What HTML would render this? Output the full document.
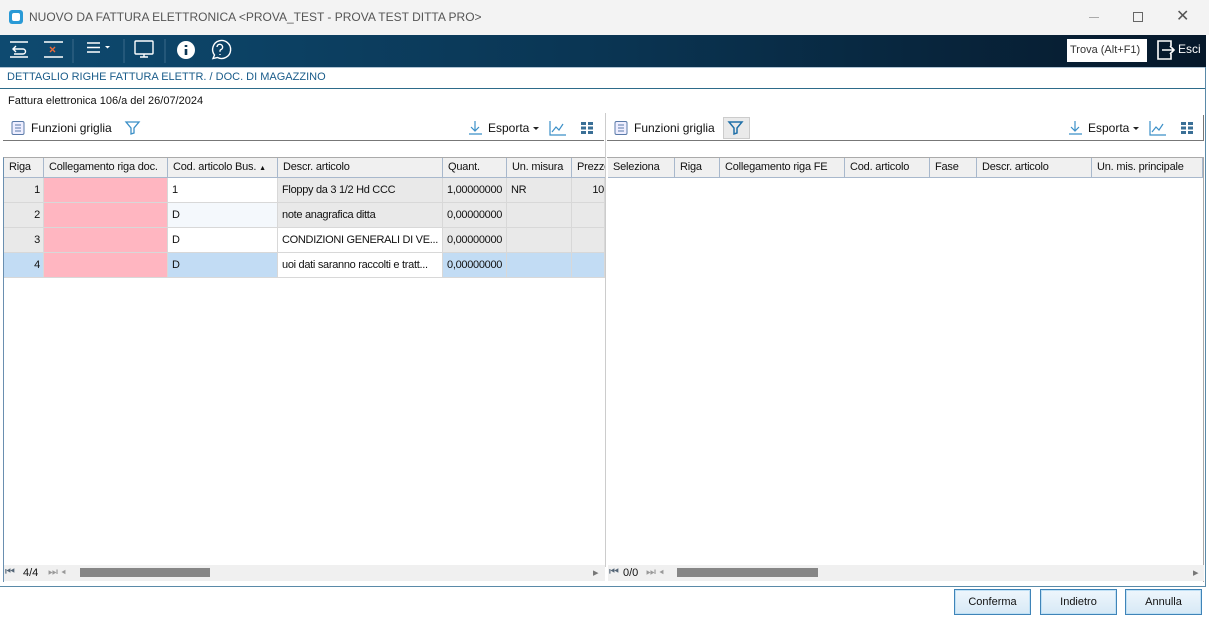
<!DOCTYPE html>
<html><head><meta charset="utf-8"><style>
*{box-sizing:border-box;margin:0;padding:0}
body{width:1209px;height:618px;overflow:hidden;background:#fff;font-family:"Liberation Sans",sans-serif;font-size:11px;color:#111;position:relative}
.a{position:absolute}
.hdr{background:#f0f0f0;border-right:1px solid #a8b8cc;border-bottom:1px solid #a8b8cc;height:20px;line-height:19px;padding-left:5px;white-space:nowrap;overflow:hidden;letter-spacing:-0.2px}
.cell{height:25px;line-height:24px;border-bottom:1px solid #d8d8d8;border-right:1px solid #d8d8d8;white-space:nowrap;overflow:hidden;padding-left:4px;letter-spacing:-0.3px}
.btn{position:absolute;top:589px;width:77px;height:26px;border:1px solid #3f84b8;background:linear-gradient(#eef6fc,#d7e9f6);text-align:center;line-height:24px;font-size:11px;box-shadow:inset 0 0 0 1px #bfe0f5}
</style></head><body>
<div class="a" style="left:0;top:0;width:1209px;height:35px;background:#f3f3f3"></div>
<div class="a" style="left:9px;top:10px;width:14px;height:14px;border-radius:3px;background:#2a9ad6"></div>
<div class="a" style="left:12px;top:13px;width:8px;height:8px;border-radius:2px;background:#fff"></div>
<div class="a" style="left:29px;top:10px;font-size:12px;color:#555">NUOVO DA FATTURA ELETTRONICA &lt;PROVA_TEST - PROVA TEST DITTA PRO&gt;</div>
<div class="a" style="left:1089px;top:17px;width:10px;height:1px;background:#aaa"></div>
<div class="a" style="left:1133px;top:12px;width:10px;height:10px;border:1px solid #666"></div>
<div class="a" style="left:1176px;top:6px;font-size:16px;color:#555">✕</div>
<div class="a" style="left:0;top:35px;width:1206px;height:32px;background:linear-gradient(90deg,#0e4a70,#0a3553 50%,#06182a)"></div>
<svg class="a" style="left:0;top:35px" width="240" height="32">
<g stroke="#fff" fill="none" stroke-width="1.4">
<path d="M10 7h18M10 22h18"/><path d="M16 11l-3 3 3 3M13 14h10a2.5 2.5 0 0 1 0 5h-9"/>
<path d="M44 7h19M44 22h19"/><path d="M50 12l5 5M55 12l-5 5" stroke="#e86a3a"/>
<path d="M87 8h13M87 12.5h13M87 17h13"/>
<rect x="135" y="6" width="18" height="13" rx="1"/><path d="M140 22h8M144 19v3"/>
<path d="M213 23.5l1.5-3.5a9 9 0 1 1 3 2.5z"/><path d="M217 12a2.8 2.8 0 1 1 3.5 2.8c-0.5 0.3-0.5 1-0.5 2M220 19v1"/>
</g>
<path d="M105 11l2.5 2.5 2.5-2.5z" fill="#fff"/>
<path d="M73 4v24M124 4v24M165 4v24" stroke="#3c6a8a"/>
<circle cx="186" cy="15" r="9" fill="#fff"/><path d="M186 10v2M186 14v6" stroke="#0a3553" stroke-width="2.6"/>
</svg>
<div class="a" style="left:1067px;top:39px;width:80px;height:23px;background:#fff;font-size:11px;line-height:23px;padding-left:3px;color:#333">Trova (Alt+F1)</div>
<svg class="a" style="left:1154px;top:38px" width="22" height="24"><g stroke="#fff" fill="none" stroke-width="1.6"><path d="M10 3H4v18h6M10 3h7v5M17 16v5h-7"/><path d="M8 12h12M16 8l4 4-4 4"/></g></svg>
<div class="a" style="left:1178px;top:42px;color:#fff;font-size:12px">Esci</div>
<div class="a" style="left:0;top:67px;width:1206px;height:22px;border-bottom:1px solid #2d6b8a;border-top:1px solid #b0c4d4"></div>
<div class="a" style="left:7px;top:71px;color:#1a5c8a;font-size:11px">DETTAGLIO RIGHE FATTURA ELETTR. / DOC. DI MAGAZZINO</div>
<div class="a" style="left:8px;top:95px;font-size:11px">Fattura elettronica 106/a del 26/07/2024</div>
<div class="a" style="left:1205px;top:67px;width:1px;height:520px;background:#5a8aa8"></div>
<div class="a" style="left:0;top:586px;width:1206px;height:1px;background:#5a8aa8"></div>
<div class="a" style="left:3px;top:115px;width:601px;height:26px;border-bottom:1px solid #777"></div>
<div class="a" style="left:607px;top:115px;width:597px;height:26px;border-bottom:1px solid #777;border-right:1px solid #777"></div>
<div class="a" style="left:605px;top:113px;width:1px;height:454px;background:#ccc"></div>
<svg class="a" style="left:10px;top:120px" width="16" height="16"><rect x="2" y="1.5" width="12" height="13" rx="1.5" fill="#eef" stroke="#5a7aa8"/><path d="M5 5h6M5 8h6M5 11h6" stroke="#5a7aa8"/></svg>
<div class="a" style="left:31px;top:121px;font-size:12px">Funzioni griglia</div>
<svg class="a" style="left:124px;top:119px" width="18" height="17"><path d="M2 3h13l-5 6v5l-3 1V9z" fill="none" stroke="#3b8fc7" stroke-width="1.3"/></svg>
<svg class="a" style="left:613px;top:120px" width="16" height="16"><rect x="2" y="1.5" width="12" height="13" rx="1.5" fill="#eef" stroke="#5a7aa8"/><path d="M5 5h6M5 8h6M5 11h6" stroke="#5a7aa8"/></svg>
<div class="a" style="left:634px;top:121px;font-size:12px">Funzioni griglia</div>
<div class="a" style="left:723px;top:117px;width:27px;height:22px;background:#eaeaea;border:1px solid #ccc"></div>
<svg class="a" style="left:727px;top:119px" width="18" height="17"><path d="M2 3h13l-5 6v5l-3 1V9z" fill="none" stroke="#1f6fa8" stroke-width="1.5"/></svg>
<svg class="a" style="left:467px;top:119px" width="140" height="18"><g fill="none" stroke="#3b8fc7" stroke-width="1.2"><path d="M8 2v10M4 8l4 4 4-4M2 15h13"/><path d="M83 2v14h16M85 13l4-5 3 3 4-6"/></g><path d="M66 8l3 3 3-3z" fill="#222"/><g fill="#3a6f96"><rect x="114" y="3" width="5" height="3"/><rect x="121" y="3" width="5" height="3"/><rect x="114" y="7.5" width="5" height="3"/><rect x="121" y="7.5" width="5" height="3"/><rect x="114" y="12" width="5" height="3"/><rect x="121" y="12" width="5" height="3"/></g></svg>
<div class="a" style="left:488px;top:121px;font-size:12px">Esporta</div>
<svg class="a" style="left:1067px;top:119px" width="140" height="18"><g fill="none" stroke="#3b8fc7" stroke-width="1.2"><path d="M8 2v10M4 8l4 4 4-4M2 15h13"/><path d="M83 2v14h16M85 13l4-5 3 3 4-6"/></g><path d="M66 8l3 3 3-3z" fill="#222"/><g fill="#3a6f96"><rect x="114" y="3" width="5" height="3"/><rect x="121" y="3" width="5" height="3"/><rect x="114" y="7.5" width="5" height="3"/><rect x="121" y="7.5" width="5" height="3"/><rect x="114" y="12" width="5" height="3"/><rect x="121" y="12" width="5" height="3"/></g></svg>
<div class="a" style="left:1088px;top:121px;font-size:12px">Esporta</div>
<div class="a" style="left:3px;top:157px;width:602px;height:425px;border-left:1px solid #6a8fb0;border-top:1px solid #aaa"></div>
<div class="a" style="left:607px;top:157px;width:597px;height:425px;border-top:1px solid #aaa;border-right:1px solid #aaa"></div>
<div class="a" style="left:4px;top:158px;width:601px;display:flex">
<div class="hdr" style="width:40px">Riga</div><div class="hdr" style="width:124px">Collegamento riga doc.</div><div class="hdr" style="width:110px">Cod. articolo Bus. <span style="font-size:7px">▲</span></div><div class="hdr" style="width:165px">Descr. articolo</div><div class="hdr" style="width:64px">Quant.</div><div class="hdr" style="width:65px">Un. misura</div><div class="hdr" style="width:33px;border-right:0">Prezzo</div>
</div>
<div class="a" style="left:608px;top:158px;width:596px;display:flex">
<div class="hdr" style="width:67px">Seleziona</div><div class="hdr" style="width:45px">Riga</div><div class="hdr" style="width:125px">Collegamento riga FE</div><div class="hdr" style="width:85px">Cod. articolo</div><div class="hdr" style="width:47px">Fase</div><div class="hdr" style="width:115px">Descr. articolo</div><div class="hdr" style="width:111px">Un. mis. principale</div>
</div>
<div class="a" style="left:4px;top:178px;width:601px">
<div style="display:flex;background:#e9e9e9"><div class="cell" style="width:40px;text-align:right;padding-right:3px">1</div><div class="cell" style="width:124px;background:#ffb6c1"></div><div class="cell" style="width:110px;background:#fff">1</div><div class="cell" style="width:165px">Floppy da 3 1/2 Hd CCC</div><div class="cell" style="width:64px">1,00000000</div><div class="cell" style="width:65px">NR</div><div class="cell" style="width:33px;text-align:right">10</div></div>
<div style="display:flex;background:#e9e9e9"><div class="cell" style="width:40px;text-align:right;padding-right:3px">2</div><div class="cell" style="width:124px;background:#ffb6c1"></div><div class="cell" style="width:110px;background:#f4f8fc">D</div><div class="cell" style="width:165px">note anagrafica ditta</div><div class="cell" style="width:64px">0,00000000</div><div class="cell" style="width:65px"></div><div class="cell" style="width:33px"></div></div>
<div style="display:flex;background:#e9e9e9"><div class="cell" style="width:40px;text-align:right;padding-right:3px">3</div><div class="cell" style="width:124px;background:#ffb6c1"></div><div class="cell" style="width:110px;background:#fff">D</div><div class="cell" style="width:165px;background:#fff">CONDIZIONI GENERALI DI VE...</div><div class="cell" style="width:64px">0,00000000</div><div class="cell" style="width:65px"></div><div class="cell" style="width:33px"></div></div>
<div style="display:flex;background:#c2dcf4"><div class="cell" style="width:40px;text-align:right;padding-right:3px">4</div><div class="cell" style="width:124px;background:#ffb6c1"></div><div class="cell" style="width:110px">D</div><div class="cell" style="width:165px;background:#fff">uoi dati saranno raccolti e tratt...</div><div class="cell" style="width:64px">0,00000000</div><div class="cell" style="width:65px"></div><div class="cell" style="width:33px"></div></div>
</div>
<div class="a" style="left:4px;top:565px;width:601px;height:16px;background:#f0f0f0"></div>
<div class="a" style="left:608px;top:565px;width:596px;height:16px;background:#f0f0f0"></div>
<div class="a" style="left:5px;top:566px;font-size:11px;color:#567">⏮</div>
<div class="a" style="left:23px;top:567px;font-size:11px">4/4</div>
<div class="a" style="left:48px;top:566px;font-size:11px;color:#999">⏭ ◂</div>
<div class="a" style="left:80px;top:568px;width:130px;height:9px;background:#868686"></div>
<div class="a" style="left:593px;top:566px;font-size:11px;color:#777">▸</div>
<div class="a" style="left:609px;top:566px;font-size:11px;color:#567">⏮</div>
<div class="a" style="left:623px;top:567px;font-size:11px">0/0</div>
<div class="a" style="left:646px;top:566px;font-size:11px;color:#999">⏭ ◂</div>
<div class="a" style="left:677px;top:568px;width:141px;height:9px;background:#868686"></div>
<div class="a" style="left:1193px;top:566px;font-size:11px;color:#777">▸</div>
<div class="btn" style="left:954px">Conferma</div>
<div class="btn" style="left:1040px">Indietro</div>
<div class="btn" style="left:1125px">Annulla</div>
</body></html>
